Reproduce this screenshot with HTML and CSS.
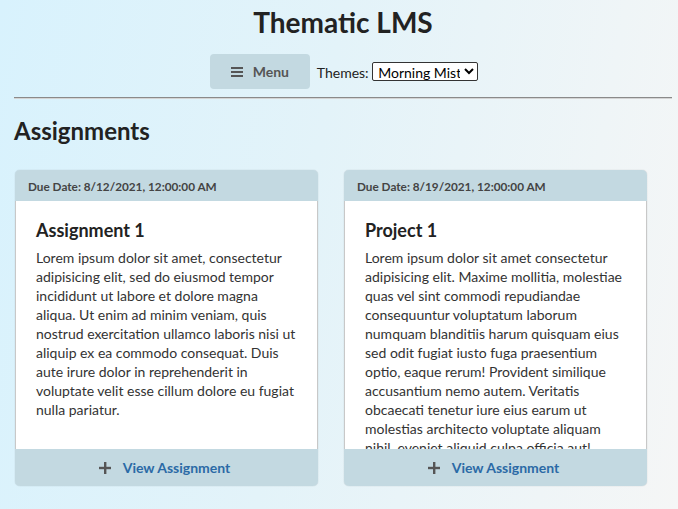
FILE: index.html
```html
<!DOCTYPE html>
<html>
<head>
<meta charset="utf-8">
<link rel="stylesheet" href="styles.css">
</head>
<body>
<div class="page">
  <h1 class="title">Thematic LMS</h1>
  <div class="nav">
    <button class="menu-btn"><svg class="ham" width="12" height="10" viewBox="0 0 12 10"><rect x="0" y="0" width="12" height="2" fill="#555"/><rect x="0" y="4" width="12" height="2" fill="#555"/><rect x="0" y="8" width="12" height="2" fill="#555"/></svg><span>Menu</span></button>
    <label class="themes">Themes: <select class="theme-select"><option>Morning Mist</option></select></label>
  </div>
  <hr class="rule">
  <h2 class="section">Assignments</h2>
  <div class="cards">
    <div class="card">
      <div class="card-head">Due Date: 8/12/2021, 12:00:00 AM</div>
      <div class="card-body">
        <h3 class="card-title">Assignment 1</h3>
        <p class="card-text">Lorem ipsum dolor sit amet, consectetur adipisicing elit, sed do eiusmod tempor incididunt ut labore et dolore magna aliqua. Ut enim ad minim veniam, quis nostrud exercitation ullamco laboris nisi ut aliquip ex ea commodo consequat. Duis aute irure dolor in reprehenderit in voluptate velit esse cillum dolore eu fugiat nulla pariatur.</p>
      </div>
      <div class="card-foot"><svg class="plus" width="12" height="12" viewBox="0 0 12 12"><rect x="5" y="0" width="2.4" height="12" fill="#555"/><rect x="0" y="4.8" width="12" height="2.4" fill="#555"/></svg><span class="link">View Assignment</span></div>
    </div>
    <div class="card">
      <div class="card-head">Due Date: 8/19/2021, 12:00:00 AM</div>
      <div class="card-body">
        <h3 class="card-title">Project 1</h3>
        <p class="card-text">Lorem ipsum dolor sit amet consectetur adipisicing elit. Maxime mollitia, molestiae quas vel sint commodi repudiandae consequuntur voluptatum laborum numquam blanditiis harum quisquam eius sed odit fugiat iusto fuga praesentium optio, eaque rerum! Provident similique accusantium nemo autem. Veritatis obcaecati tenetur iure eius earum ut molestias architecto voluptate aliquam nihil, eveniet aliquid culpa officia aut! Impedit sit sunt quaerat, odit, tenetur error, harum nesciunt ipsum debitis quas aliquid.</p>
      </div>
      <div class="card-foot"><svg class="plus" width="12" height="12" viewBox="0 0 12 12"><rect x="5" y="0" width="2.4" height="12" fill="#555"/><rect x="0" y="4.8" width="12" height="2.4" fill="#555"/></svg><span class="link">View Assignment</span></div>
    </div>
  </div>
</div>
</body>
</html>
```
FILE: styles.css
```css
html, body {
  margin: 0;
  padding: 0;
  height: 100%;
}
body {
  font-family: Lato, "Open Sans", sans-serif;
  color: #222;
  background: linear-gradient(100deg, #d8f2fd 0%, #e3f3f9 45%, #f5f6f6 100%);
  overflow: hidden;
}
.page {
  padding: 0 6px 0 14px;
}
.title {
  margin: 0;
  padding-top: 5px;
  font-size: 28px;
  font-weight: 700;
  line-height: 34px;
  text-align: center;
  color: #222;
}
.nav {
  display: flex;
  justify-content: center;
  align-items: center;
  gap: 7px;
  margin-top: 15px;
  padding-left: 2px;
}
.menu-btn {
  display: flex;
  align-items: center;
  justify-content: center;
  gap: 10px;
  width: 100px;
  height: 35px;
  border: none;
  border-radius: 4px;
  background: #c3d9e1;
  font-family: Lato, sans-serif;
  font-size: 14px;
  font-weight: 700;
  color: #555;
  padding: 0;
}
.themes {
  font-size: 14px;
  color: #222;
}
.theme-select {
  font-family: Lato, sans-serif;
  font-size: 14px;
  width: 106px;
  height: 19px;
  padding: 0 1px;
  border: 1px solid #333;
  border-radius: 2px;
  background: #fff;
  color: #000;
}
.rule {
  margin: 8px 0 0 0;
  border: none;
  border-top: 1px solid #8a8a8a;
  border-bottom: 1px solid #d4d4d4;
  height: 0;
}
.section {
  margin: 18px 0 0 0;
  font-size: 24px;
  font-weight: 700;
  line-height: 28px;
  color: #222;
}
.cards {
  display: grid;
  grid-template-columns: 303px 303px;
  gap: 26px;
  margin-top: 25px;
  margin-left: 1px;
}
.card {
  display: flex;
  flex-direction: column;
  border-radius: 5px;
  overflow: hidden;
  box-shadow: 0 0 1px rgba(0,0,0,0.3);
}
.card-head {
  height: 31px;
  box-sizing: border-box;
  padding: 10px 13px 8px 13px;
  background: #c3d9e1;
  font-size: 11.75px;
  font-weight: 700;
  line-height: 13px;
  color: #444;
}
.card-body {
  height: 248px;
  box-sizing: border-box;
  padding: 17px 20px 0 20px;
  background: #fff;
  border-left: 1px solid #c8c8c8;
  border-right: 1px solid #c8c8c8;
  overflow: hidden;
}
.card-title {
  margin: 0;
  font-size: 18px;
  font-weight: 700;
  line-height: 24px;
  color: #222;
}
.card-text {
  margin: 6px 0 0 0;
  font-size: 14px;
  line-height: 19px;
  color: #333;
}
.card-foot {
  height: 37px;
  display: flex;
  align-items: center;
  justify-content: center;
  gap: 12px;
  padding-right: 4px;
  background: #c3d9e1;
}
.link {
  font-size: 14px;
  font-weight: 700;
  color: #2b6aa6;
}
```
